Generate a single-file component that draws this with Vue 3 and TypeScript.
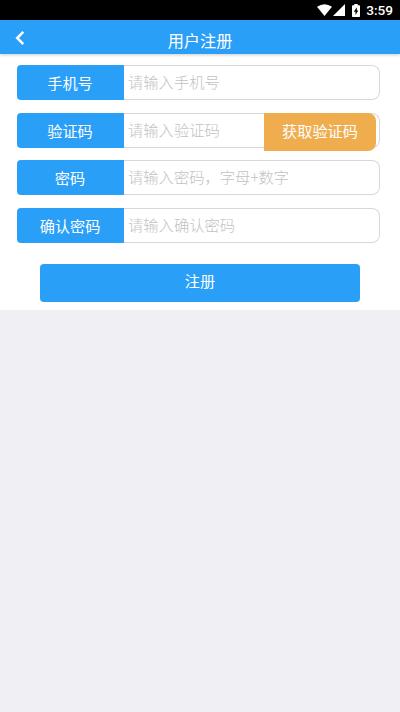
<script setup lang="ts">
import { reactive } from 'vue'

type FieldKey = 'phone' | 'code' | 'password' | 'confirm'

interface Field {
  key: FieldKey
  label: string
  hint: string
  type: string
}

const fields: Field[] = [
  { key: 'phone', label: '手机号', hint: '请输入手机号', type: 'tel' },
  { key: 'code', label: '验证码', hint: '请输入验证码', type: 'text' },
  { key: 'password', label: '密码', hint: '请输入密码，字母+数字', type: 'password' },
  { key: 'confirm', label: '确认密码', hint: '请输入确认密码', type: 'password' },
]

const form = reactive<Record<FieldKey, string>>({ phone: '', code: '', password: '', confirm: '' })
</script>

<template>
  <div class="screen">
    <div class="status">
      <svg class="wifi" viewBox="0 0 15 12"><path d="M0 2.8Q7.5-2.2 15 2.8L7.5 12Z" /></svg>
      <svg class="signal" viewBox="0 0 12 12"><path d="M12 0V12H0Z" /></svg>
      <svg class="battery" viewBox="0 0 8 13">
        <path fill-rule="evenodd" d="M2.3 0H5.7V1.3H7.3Q8 1.3 8 2V12.3Q8 13 7.3 13H.7Q0 13 0 12.3V2Q0 1.3 .7 1.3H2.3ZM4.8 3.3L1.8 7.7H3.5V11L6.3 6.5H4.8Z" />
      </svg>
      <span class="clock">3:59</span>
    </div>
    <header class="bar">
      <svg class="back" viewBox="0 0 10 16"><path d="M8.3 1.8L2.2 8L8.3 14.2" /></svg>
      <h1>用户注册</h1>
    </header>
    <form class="panel" @submit.prevent>
      <div v-for="f in fields" :key="f.key" class="row">
        <label :for="f.key">{{ f.label }}</label>
        <input :id="f.key" v-model="form[f.key]" :type="f.type" :placeholder="f.hint" />
        <button v-if="f.key === 'code'" type="button" class="send">获取验证码</button>
      </div>
      <button class="submit" type="submit">注册</button>
    </form>
  </div>
</template>

<style>
body {
  background: #efeff4;
}
</style>

<style scoped>
.screen,
.screen * {
  box-sizing: border-box;
}
.screen {
  height: 712px;
  background: #efeff4;
  font-family: "Noto Sans CJK SC", sans-serif;
  color: #fff;
}
.status {
  height: 20px;
  background: #000;
  display: flex;
  justify-content: flex-end;
  align-items: center;
  padding-right: 7px;
}
.status svg {
  fill: #fff;
}
.wifi {
  width: 15px;
  height: 12px;
}
.signal {
  width: 12px;
  height: 12px;
  margin-left: 1px;
}
.battery {
  width: 8px;
  height: 13px;
  margin-left: 7px;
}
.clock {
  margin-left: 6px;
  font: 500 13.6px/20px Roboto, sans-serif;
}
.bar {
  position: relative;
  height: 34px;
  padding-left: 15px;
  background: #2a9ff7;
  box-shadow: 0 1px 3px rgba(0, 0, 0, 0.2);
  display: flex;
  align-items: center;
}
.back {
  width: 10px;
  height: 16px;
  margin-top: 2px;
  fill: none;
  stroke: #fff;
  stroke-width: 2.5;
}
h1 {
  flex: 1;
  margin: 6px 25px 0 0;
  text-align: center;
  font-size: 16.2px;
  line-height: 29px;
  font-weight: 400;
}
.panel {
  height: 256px;
  padding: 11px 20px 0 16.5px;
  background: #fff;
}
.row {
  position: relative;
  display: flex;
  height: 35px;
  margin-bottom: 12.5px;
}
label {
  width: 107px;
  border-radius: 4px 0 0 4px;
  background: #2a9ff7;
  text-align: center;
  font-size: 15.2px;
  line-height: 34px;
}
input {
  flex: 1;
  min-width: 0;
  padding: 0 4px 3px 4.5px;
  border: 1px solid #d8d8d8;
  border-left: 0;
  border-radius: 0 8px 8px 0;
  outline: 0;
  background: #fff;
  color: #333;
  font-family: inherit;
  font-size: 15.3px;
}
input::placeholder {
  color: #c2c2c2;
  font-weight: 300;
  opacity: 1;
}
button {
  padding: 0;
  border: 0;
  color: #fff;
  font-family: inherit;
  font-size: 15.2px;
}
.send {
  position: absolute;
  top: 0;
  right: 4px;
  width: 112px;
  height: 38.5px;
  padding-bottom: 4px;
  border-radius: 0 8px 8px 0;
  background: #efad4e;
}
.submit {
  display: block;
  width: 320px;
  height: 38.5px;
  margin: 21px 0 0 23.5px;
  padding-bottom: 5px;
  border-radius: 4px;
  background: #2a9ff7;
}
</style>
